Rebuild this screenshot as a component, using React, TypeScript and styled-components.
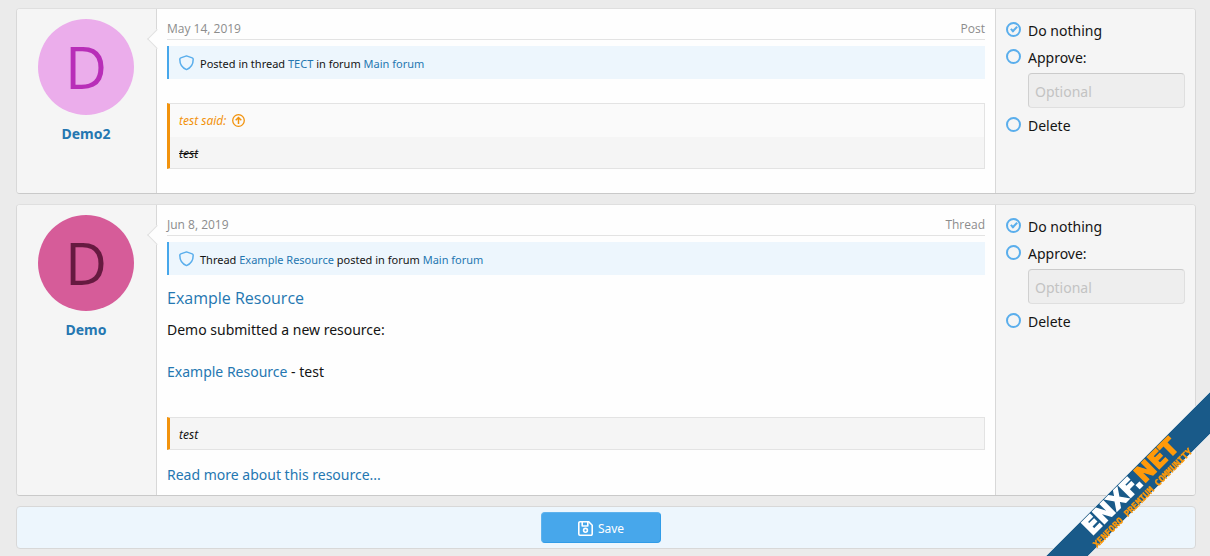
import React, { useId, useState } from 'react';
import styled, { createGlobalStyle } from 'styled-components';

const compactFont = "'Open Sans', 'Noto Sans', sans-serif";

const GlobalStyle = createGlobalStyle`
  *, *::before, *::after { box-sizing: border-box; }
  body {
    margin: 0;
    background: #ebebeb;
    color: #141414;
    font-family: 'Noto Sans', 'Open Sans', sans-serif;
    font-size: 14px;
    line-height: 21px;
  }
  a { color: #2577b1; text-decoration: none; }
  a:hover { text-decoration: underline; }
`;

const Queue = styled.form`
  display: flex;
  flex-direction: column;
  gap: 10px;
  padding: 8px 14px 8px 16px;
`;

const Card = styled.article`
  display: flex;
  background: #fefefe;
  border: 1px solid #d8d8d8;
  border-top-color: #dfdfdf;
  border-bottom-color: #c9c9c9;
  border-radius: 4px;
`;

const UserCell = styled.div`
  flex: 0 0 140px;
  display: flex;
  flex-direction: column;
  align-items: center;
  gap: 8px;
  padding: 10px 12px 10px 11px;
  background: #f5f5f5;
  border-right: 1px solid #d8d8d8;
  border-radius: 3px 0 0 3px;
`;

const Avatar = styled.a<{ $bg: string; $fg: string }>`
  width: 96px;
  height: 96px;
  border-radius: 50%;
  background: ${(p) => p.$bg};
  && { color: ${(p) => p.$fg}; }
  font-family: ${compactFont};
  font-size: 58px;
  line-height: 96px;
  text-align: center;
`;

const UserName = styled.a`
  font-weight: 700;
`;

const MainCell = styled.div`
  position: relative;
  flex: 1;
  min-width: 0;
  padding: 10px;

  &::before {
    content: '';
    position: absolute;
    top: 23px;
    left: -7px;
    width: 14px;
    height: 14px;
    background: #fefefe;
    border: solid #e0e0e0;
    border-width: 0 0 1px 1px;
    transform: rotate(45deg);
  }
`;

const Meta = styled.header`
  position: relative;
  display: flex;
  justify-content: space-between;
  margin-bottom: 6px;
  padding-top: 1px;
  padding-bottom: 1px;
  border-bottom: 1px solid #e3e3e3;
  color: #8c8c8c;
  font-family: ${compactFont};
  font-size: 12px;
  line-height: 18px;
`;

const Notice = styled.div`
  display: flex;
  align-items: center;
  gap: 6px;
  height: 33px;
  padding: 2px 10px 0;
  background: #edf6fd;
  border-left: 2px solid #47a7eb;
  font-size: 11px;
  svg { margin-top: -2px; }
`;

const Body = styled.div<{ $top: number }>`
  padding-top: ${(p) => p.$top}px;
`;

const Title = styled.h2`
  margin: 0 0 10px;
  font-family: ${compactFont};
  font-size: 16px;
  font-weight: 400;
  line-height: 22px;
`;

const Paragraph = styled.p<{ $gap: number }>`
  margin: 0 0 ${(p) => p.$gap}px;
`;

const Quote = styled.blockquote`
  margin: 0 0 14px;
  border: 1px solid #e3e3e3;
  border-left: 3px solid #f2930d;
  background: #f5f5f5;
  font-size: 12px;
  font-style: italic;
`;

const QuoteTitle = styled.a`
  display: flex;
  align-items: center;
  gap: 6px;
  height: 33px;
  padding: 0 9px;
  background: #fafafa;
  && { color: #f2930d; }
`;

const QuoteText = styled.div`
  padding: 6px 9px 4px;
`;

const ActionCell = styled.fieldset`
  flex: 0 0 200px;
  width: 200px;
  min-width: 0;
  display: flex;
  flex-direction: column;
  gap: 6px;
  margin: 0;
  padding: 11px 10px;
  background: #f5f5f5;
  border: 0;
  border-left: 1px solid #d8d8d8;
  border-radius: 0 3px 3px 0;
`;

const Choice = styled.label`
  display: flex;
  gap: 7px;
`;

const Radio = styled.input`
  appearance: none;
  display: grid;
  justify-content: center;
  flex: 0 0 15px;
  height: 15px;
  margin: 2px 0 0;
  border: 2px solid #5aaeec;
  border-radius: 50%;

  &:checked::before {
    content: '';
    width: 4px;
    height: 7px;
    margin-top: 1px;
    border: solid #5aaeec;
    border-width: 0 2px 2px 0;
    transform: rotate(45deg);
  }
`;

const Reason = styled.input`
  height: 35px;
  min-width: 0;
  margin: -1px 0 1px 22px;
  padding: 6px 6px 4px;
  background: #eeeeee;
  border: 1px solid #dfdfdf;
  border-top-color: #cbcbcb;
  border-left-color: #d0d0d0;
  border-radius: 4px;
  font: inherit;
  &::placeholder { color: #c3c3c3; opacity: 1; }
`;

const SaveBar = styled.div`
  display: flex;
  justify-content: center;
  padding: 5px 15px 5px 5px;
  background: #edf6fd;
  border: 1px solid #d8d8d8;
  border-radius: 4px;
`;

const SaveButton = styled.button`
  display: flex;
  align-items: center;
  justify-content: center;
  gap: 5px;
  width: 120px;
  height: 31px;
  padding: 1px 0 0;
  color: #fefefe;
  background: #47a7eb;
  border: 1px solid #5eb2ed;
  border-right-color: #309ce8;
  border-bottom-color: #309ce8;
  border-radius: 4px;
  font: inherit;
  font-size: 12px;
`;

const Ribbon = styled.svg`
  position: fixed;
  right: 0;
  bottom: 0;
  font-family: 'DejaVu Sans', sans-serif;
  font-weight: 700;
`;

const Tagline = styled.text`
  font-family: 'DejaVu Sans Mono', monospace;
  font-size: 9px;
`;

const ShieldIcon = () => (
  <svg width="15" height="16" viewBox="0 0 15 16" fill="none" stroke="#5aaeec" strokeWidth="1.5" strokeLinejoin="round" aria-hidden="true">
    <path d="M7.5 .9 13.2 2.9C13.9 3.2 14.2 3.6 14.2 4.3 14.2 9.2 11.6 13 7.5 14.6 3.4 13 .8 9.2.8 4.3.8 3.6 1.1 3.2 1.8 2.9Z" />
  </svg>
);

const UpIcon = () => (
  <svg width="13" height="13" viewBox="0 0 13 13" fill="none" stroke="#f2930d" strokeWidth="1.3" aria-hidden="true">
    <circle cx="6.5" cy="6.5" r="5.8" />
    <path d="M6.5 10V3.6M3.7 6.3 6.5 3.5l2.8 2.8" strokeWidth="1.5" />
  </svg>
);

const SaveIcon = () => (
  <svg width="15" height="15" viewBox="0 0 15 15" fill="none" stroke="#fefefe" strokeWidth="1.6" strokeLinejoin="round" aria-hidden="true">
    <path d="M2 .8h8.8l3.4 3.4V13a1.2 1.2 0 0 1-1.2 1.2H2A1.2 1.2 0 0 1 .8 13V2A1.2 1.2 0 0 1 2 .8Z" />
    <path d="M4.2 1v4h5.6V1" />
    <circle cx="7.5" cy="9.3" r="1.9" />
  </svg>
);

function Actions() {
  const name = useId();
  const [action, setAction] = useState('none');
  const radio = (value: string, label: string) => (
    <Choice>
      <Radio type="radio" name={name} value={value} checked={action === value} onChange={() => setAction(value)} />
      {label}
    </Choice>
  );
  return (
    <ActionCell>
      {radio('none', 'Do nothing')}
      {radio('approve', 'Approve:')}
      <Reason type="text" placeholder="Optional" aria-label="Approval note" disabled={action !== 'approve'} />
      {radio('delete', 'Delete')}
    </ActionCell>
  );
}

type ItemProps = {
  user: string;
  bg: string;
  fg: string;
  date: string;
  kind: string;
  notice: React.ReactNode;
  children: React.ReactNode;
};

function QueueItem({ user, bg, fg, date, kind, notice, children }: ItemProps) {
  return (
    <Card>
      <UserCell>
        <Avatar href="#" $bg={bg} $fg={fg}>D</Avatar>
        <UserName href="#">{user}</UserName>
      </UserCell>
      <MainCell>
        <Meta>
          <time>{date}</time>
          <span>{kind}</span>
        </Meta>
        <Notice>
          <ShieldIcon />
          <span>{notice}</span>
        </Notice>
        {children}
      </MainCell>
      <Actions />
    </Card>
  );
}

export default function App() {
  return (
    <>
      <GlobalStyle />
      <Queue onSubmit={(e) => e.preventDefault()}>
        <QueueItem
          user="Demo2"
          bg="#ebadeb"
          fg="#b82eb8"
          date="May 14, 2019"
          kind="Post"
          notice={<>Posted in thread <a href="#">TECT</a> in forum <a href="#">Main forum</a></>}
        >
          <Body $top={24}>
            <Quote>
              <QuoteTitle href="#">test said: <UpIcon /></QuoteTitle>
              <QuoteText><s>test</s></QuoteText>
            </Quote>
          </Body>
        </QueueItem>
        <QueueItem
          user="Demo"
          bg="#d65c99"
          fg="#661a40"
          date="Jun 8, 2019"
          kind="Thread"
          notice={<>Thread <a href="#">Example Resource</a> posted in forum <a href="#">Main forum</a></>}
        >
          <Body $top={12}>
            <Title><a href="#">Example Resource</a></Title>
            <Paragraph $gap={21}>Demo submitted a new resource:</Paragraph>
            <Paragraph $gap={35}><a href="#">Example Resource</a> - test</Paragraph>
            <Quote>
              <QuoteText>test</QuoteText>
            </Quote>
            <Paragraph $gap={0}><a href="#">Read more about this resource...</a></Paragraph>
          </Body>
        </QueueItem>
        <SaveBar>
          <SaveButton type="submit"><SaveIcon />Save</SaveButton>
        </SaveBar>
      </Queue>
      <Ribbon width="164" height="164" viewBox="0 0 164 164">
        <path d="M0 164 164 0V42L42 164Z" fill="#195a89" />
        <path d="M0 164 164 0M42 164 164 42" stroke="#c3d3de" strokeWidth="1" />
        <g transform="translate(46 144) rotate(-45)">
          <text fontSize="23" fill="#ffffff" stroke="#ffffff" strokeWidth="1.4">
            ENXF.<tspan fill="#ff9a0a" stroke="#ff9a0a">NET</tspan>
          </text>
        </g>
        <g transform="translate(51 156) rotate(-45)">
          <Tagline fill="#ff9a0a" stroke="#ff9a0a" strokeWidth="0.4">XENFORO PREMIUM COMMUNITY</Tagline>
        </g>
      </Ribbon>
    </>
  );
}
